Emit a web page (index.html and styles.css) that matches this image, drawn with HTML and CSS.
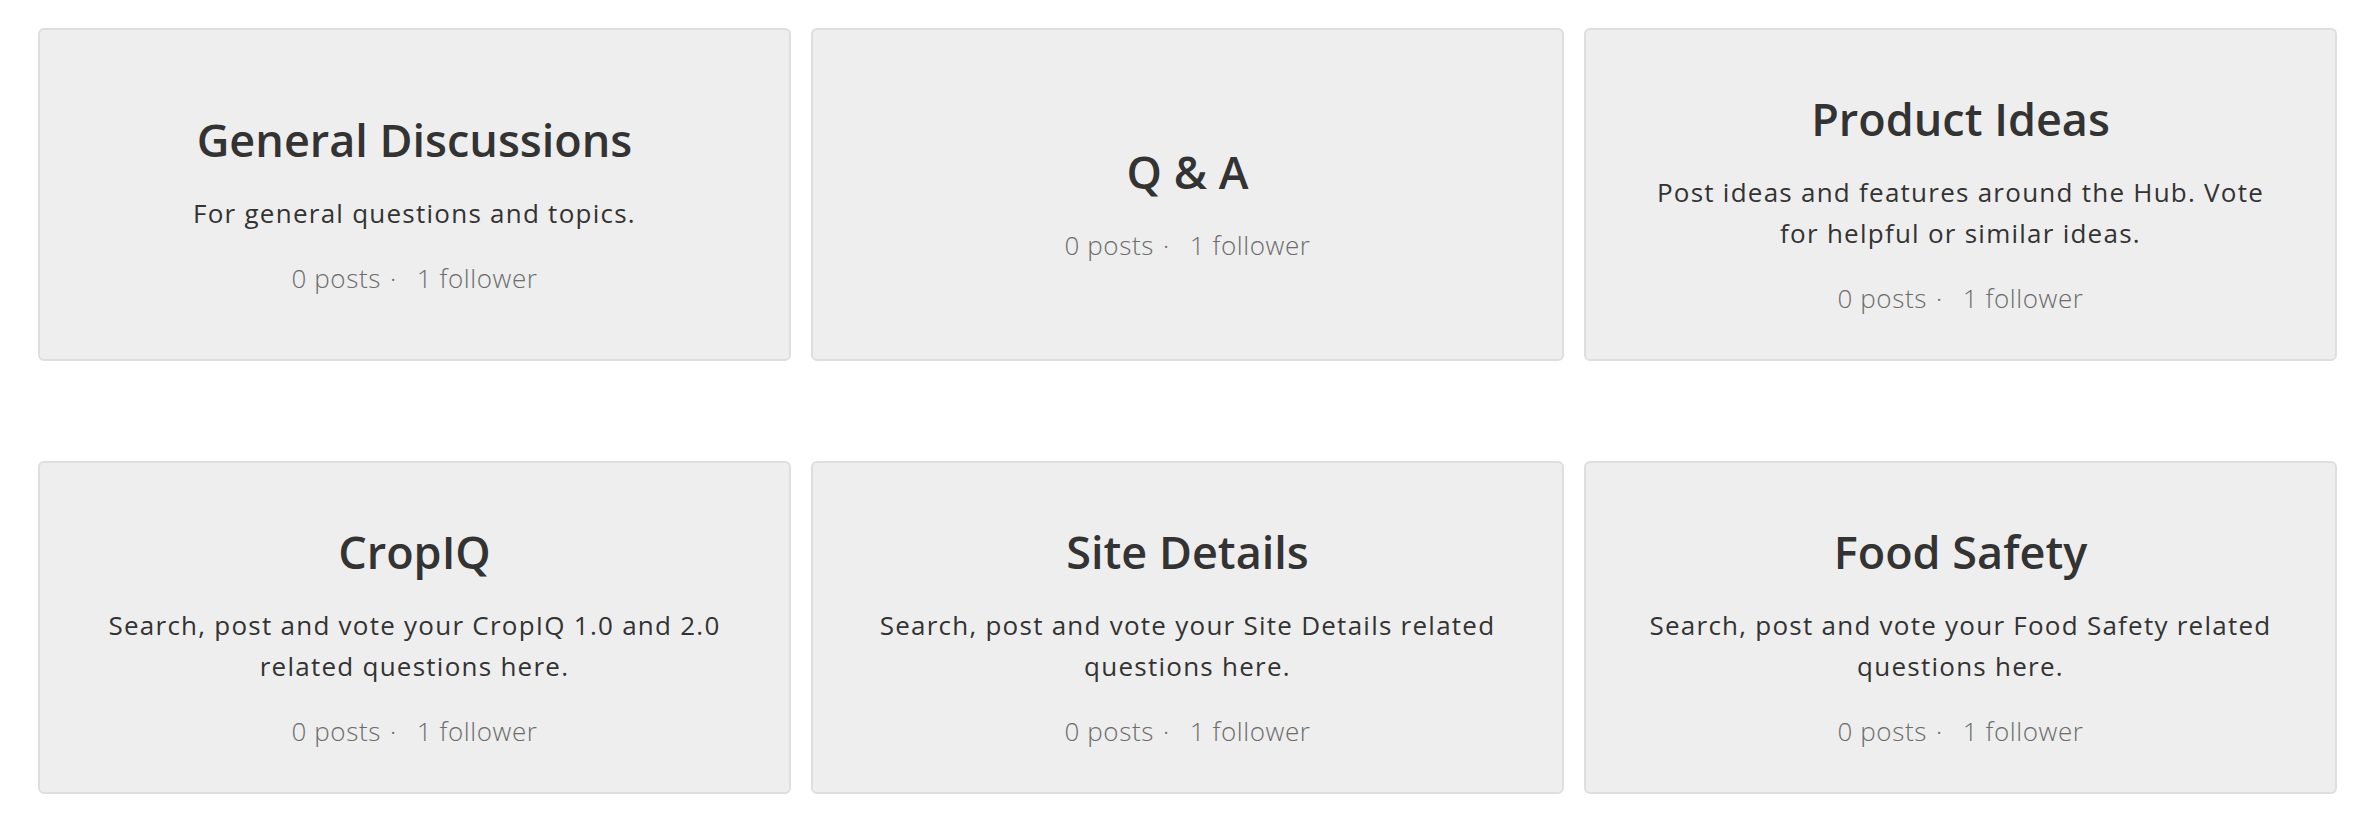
FILE: index.html
```html
<!DOCTYPE html>
<html>
<head>
	<title>Community Categories</title>
	<link rel="stylesheet" href="styles.css">
</head>
<body>
	<div class="category-grid">
		<div class="category-card">
			<h2 class="category-title">General Discussions</h2>
			<p class="category-desc">For general questions and topics.</p>
			<p class="category-meta"><span>0 posts</span><span class="dot">&middot;</span><span>1 follower</span></p>
		</div>
		<div class="category-card">
			<h2 class="category-title">Q &amp; A</h2>
			<p class="category-meta"><span>0 posts</span><span class="dot">&middot;</span><span>1 follower</span></p>
		</div>
		<div class="category-card">
			<h2 class="category-title">Product Ideas</h2>
			<p class="category-desc">Post ideas and features around the Hub. Vote for helpful or similar ideas.</p>
			<p class="category-meta"><span>0 posts</span><span class="dot">&middot;</span><span>1 follower</span></p>
		</div>
		<div class="category-card">
			<h2 class="category-title">CropIQ</h2>
			<p class="category-desc">Search, post and vote your CropIQ 1.0 and 2.0 related questions here.</p>
			<p class="category-meta"><span>0 posts</span><span class="dot">&middot;</span><span>1 follower</span></p>
		</div>
		<div class="category-card">
			<h2 class="category-title">Site Details</h2>
			<p class="category-desc">Search, post and vote your Site Details related questions here.</p>
			<p class="category-meta"><span>0 posts</span><span class="dot">&middot;</span><span>1 follower</span></p>
		</div>
		<div class="category-card">
			<h2 class="category-title">Food Safety</h2>
			<p class="category-desc">Search, post and vote your Food Safety related questions here.</p>
			<p class="category-meta"><span>0 posts</span><span class="dot">&middot;</span><span>1 follower</span></p>
		</div>
	</div>
</body>
</html>
```
FILE: styles.css
```css
body {
	margin: 0;
	background: #fff;
	color: #333;
	font-family: "Open Sans", "Noto Sans", sans-serif;
}

.category-grid {
	display: grid;
	grid-template-columns: repeat(3, 1fr);
	column-gap: 20px;
	row-gap: 100px;
	padding: 28px 29px 0 38px;
}

.category-card {
	display: flex;
	flex-direction: column;
	justify-content: center;
	padding: 62px 55px 40px;
	background: #eee;
	border: 2px solid #dedede;
	border-radius: 6px;
	text-align: center;
}

.category-title {
	margin: 0 0 26px;
	font-size: 45px;
	font-weight: 600;
	line-height: 54px;
	color: #333;
}

.category-desc {
	margin: 0 0 24px;
	font-size: 26px;
	line-height: 41px;
	letter-spacing: 1.25px;
	color: #333;
}

.category-meta {
	margin: 0;
	font-size: 26px;
	font-weight: 300;
	line-height: 41px;
	letter-spacing: 0.6px;
	color: #6c6c6c;
}

.category-meta .dot {
	margin: 0 20px 0 9px;
}
```
